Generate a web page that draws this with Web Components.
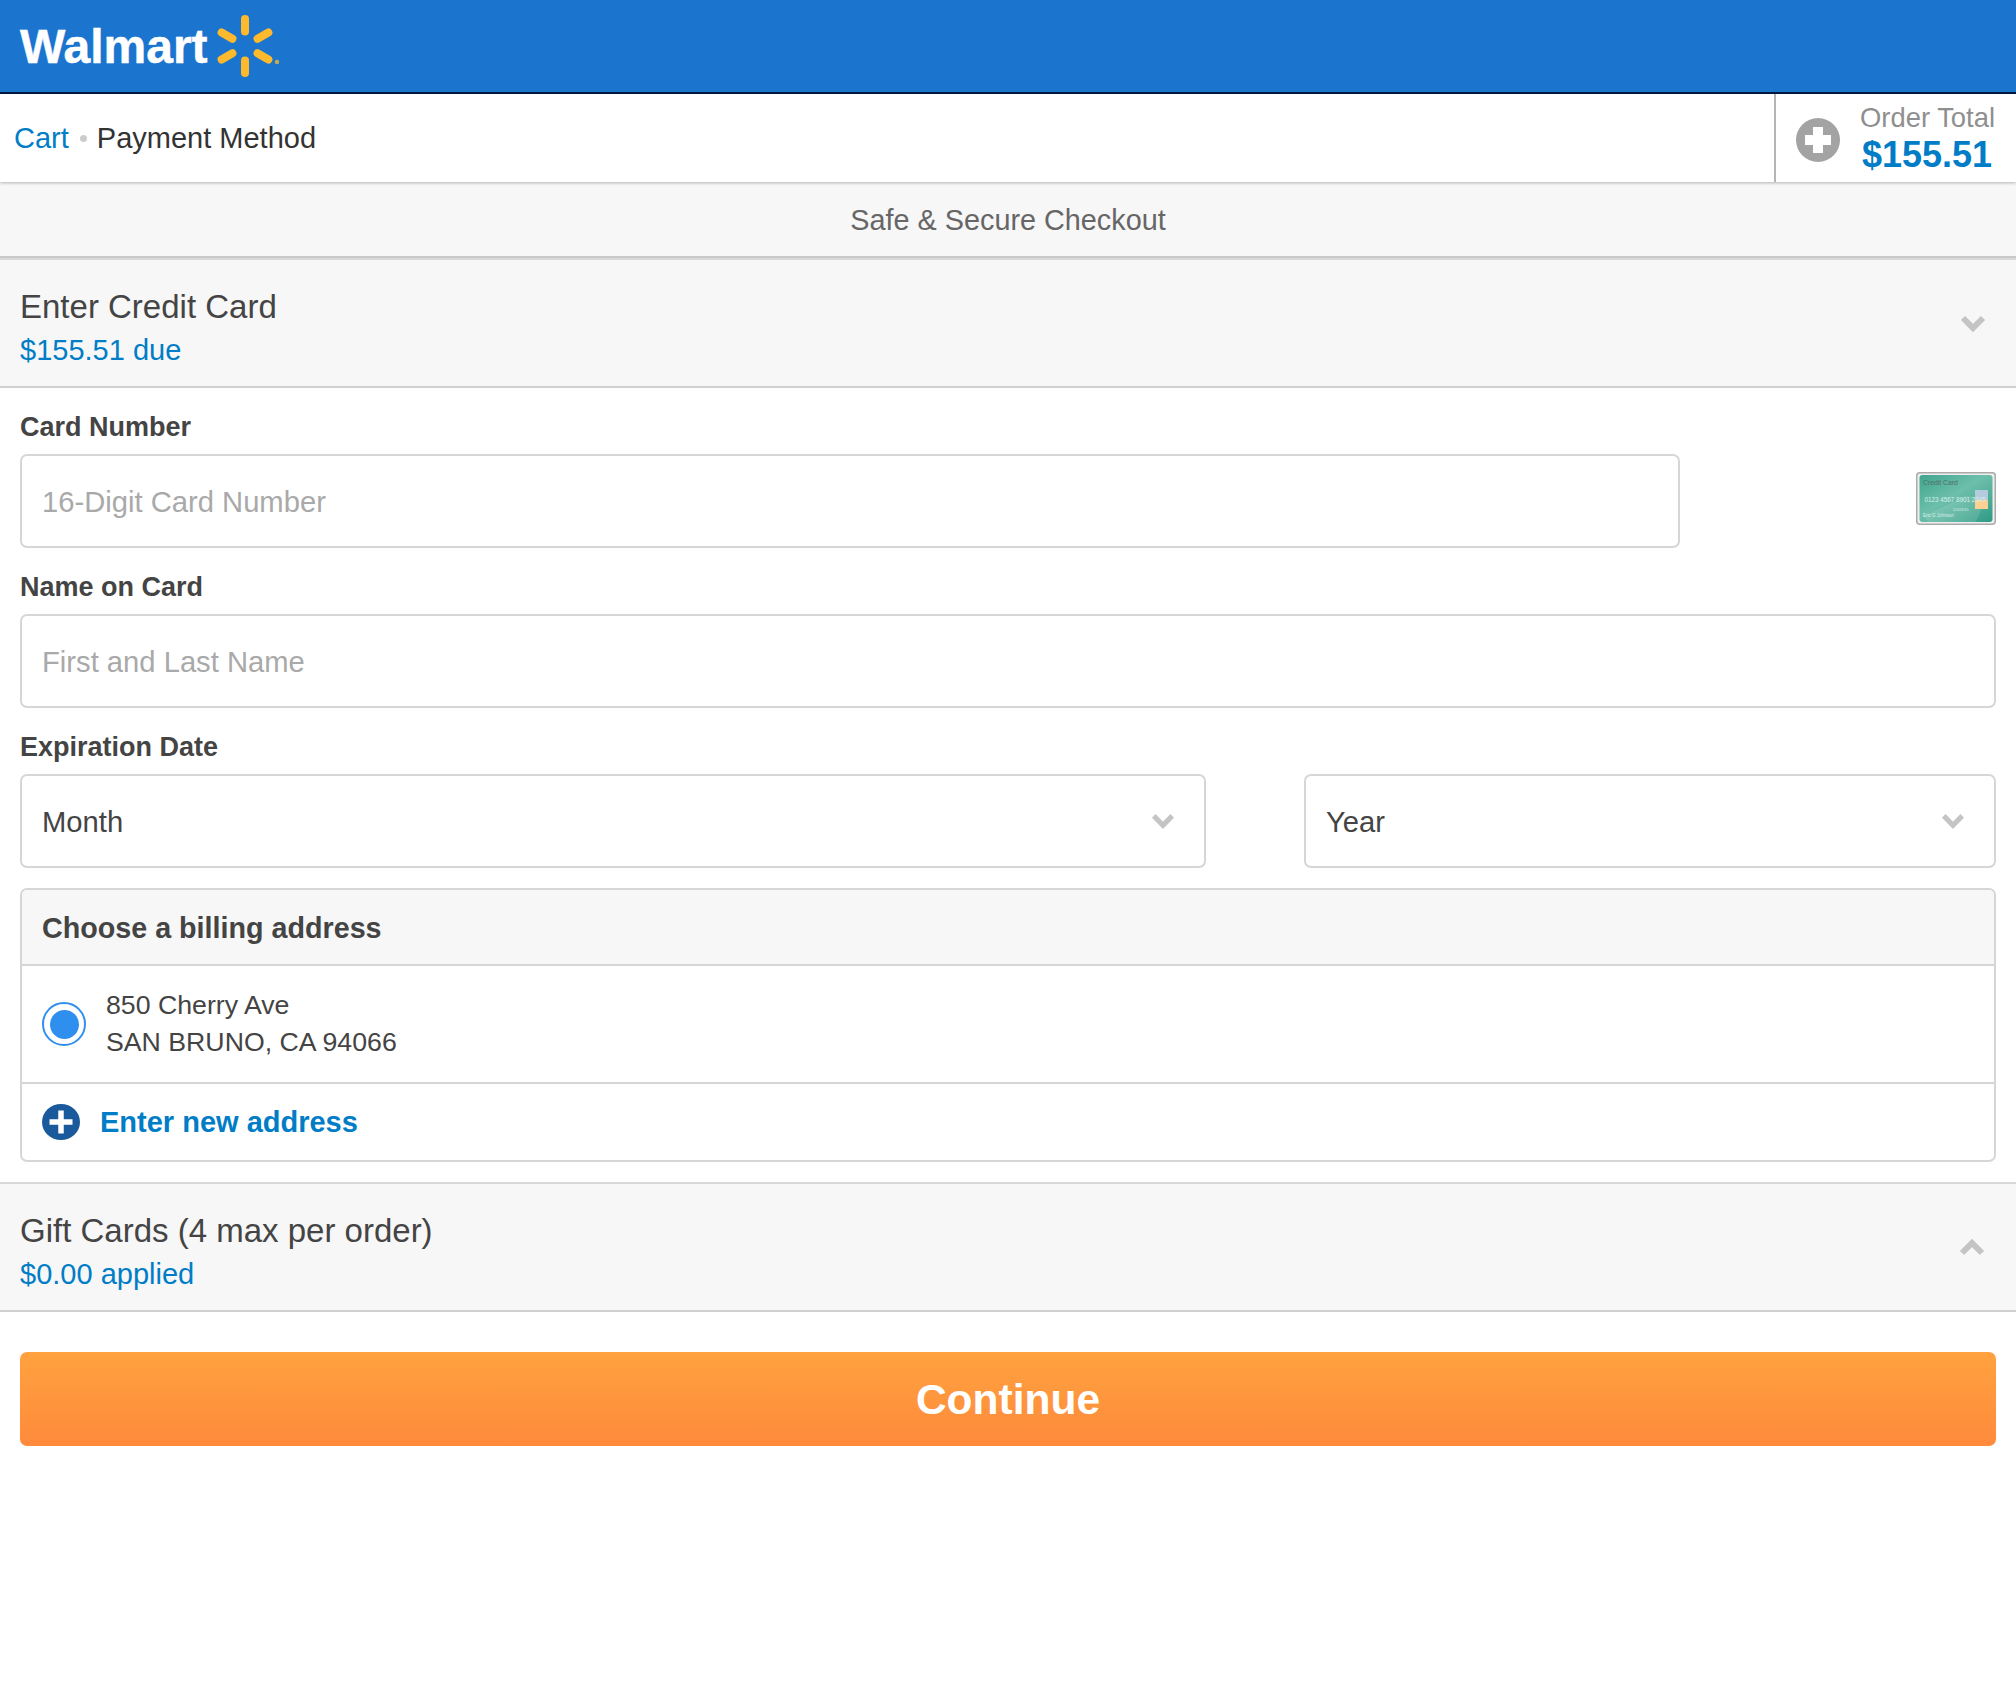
<!DOCTYPE html>
<html><head><meta charset="utf-8"><title>Payment Method</title>
<style>
html,body{margin:0;padding:0;background:#fff}
body{font-family:"Liberation Sans",Arial,sans-serif;color:#444;width:2016px;min-height:1698px}
</style></head><body>
<wm-header></wm-header>
<wm-crumbs></wm-crumbs>
<wm-notice>Safe &amp; Secure Checkout</wm-notice>
<wm-section-head dir-icon="down" title-text="Enter Credit Card" sub="$155.51 due"></wm-section-head>
<wm-form>
  <wm-field label="Card Number"><wm-card-row><wm-box placeholder>16-Digit Card Number</wm-box><wm-card-art></wm-card-art></wm-card-row></wm-field>
  <wm-field label="Name on Card"><wm-box placeholder>First and Last Name</wm-box></wm-field>
  <wm-field label="Expiration Date"><wm-expiry><wm-box select>Month</wm-box><wm-box select>Year</wm-box></wm-expiry></wm-field>
  <wm-billing></wm-billing>
</wm-form>
<wm-section-head dir-icon="up" title-text="Gift Cards (4 max per order)" sub="$0.00 applied"></wm-section-head>
<wm-continue>Continue</wm-continue>
<script>
function def(name, html){
  customElements.define(name, class extends HTMLElement{
    connectedCallback(){
      if(this.shadowRoot) return;
      const r=this.attachShadow({mode:'open'});
      r.innerHTML = typeof html==='function' ? html(this) : html;
    }
  });
}
const chev=(dir,w,h,sw)=>`<svg width="${w}" height="${h}" viewBox="0 0 26 17" preserveAspectRatio="none" style="display:block">
<path d="${dir==='up'?'M3 14 13 4l10 10':'M3 3l10 10L23 3'}" fill="none" stroke="#c4c4c4" stroke-width="${sw}"/></svg>`;

def('wm-header',`<style>
:host{display:flex;align-items:center;height:92px;background:#1b75cf;border-bottom:2px solid #001a3d;padding-left:20px}
.t{font:bold 48px/1 "Liberation Sans",Arial,sans-serif;color:#fff;position:relative;top:1px;-webkit-text-stroke:.5px #fff}
svg{display:block;margin-left:7px;position:relative;top:1px}
</style><span class="t">Walmart</span>
<svg width="68" height="64" viewBox="0 0 68 64" fill="#ffb92c">
<g transform="translate(30,31)">
<rect x="-4" y="-31" width="8" height="20.500" rx="4"/>
<rect x="-4" y="-31" width="8" height="20.500" rx="4" transform="rotate(60)"/>
<rect x="-4" y="-31" width="8" height="20.500" rx="4" transform="rotate(120)"/>
<rect x="-4" y="-31" width="8" height="20.500" rx="4" transform="rotate(180)"/>
<rect x="-4" y="-31" width="8" height="20.500" rx="4" transform="rotate(240)"/>
<rect x="-4" y="-31" width="8" height="20.500" rx="4" transform="rotate(300)"/>
</g><circle cx="62" cy="47" r="2.200" fill="#c9a94e"/></svg>`);

def('wm-crumbs',`<style>
:host{display:flex;align-items:stretch;height:88px;background:#fff;position:relative;z-index:1;box-shadow:0 1px 3px rgba(0,0,0,.28)}
.path{flex:1;display:flex;align-items:center;padding-left:14px;font-size:29px;color:#333}
a{color:#007dc6;text-decoration:none}
.dot{width:7px;height:7px;border-radius:50%;background:#ccc;margin:0 11px 0 11px;position:relative;left:0}
.p{margin-left:-1px}
wm-total{flex:none}
</style><div class="path"><a>Cart</a><span class="dot"></span><span class="p">Payment Method</span></div><wm-total></wm-total>`);

def('wm-total',`<style>
:host{display:flex;align-items:center;width:242px;border-left:2px solid #b5b5b5;padding-left:20px;box-sizing:border-box}
svg{display:block;flex:none;margin-right:20px;position:relative;top:2px}
.n{color:#8f8f8f;font-size:27.400px;line-height:34px;white-space:nowrap}
.v{color:#007dc6;font-size:36px;font-weight:bold;line-height:40px;margin-left:2px;white-space:nowrap}
</style><svg width="44" height="44" viewBox="0 0 44 44"><circle cx="22" cy="22" r="22" fill="#a3a3a3"/><path d="M17 9h10v8h8v10h-8v8H17v-8H9V17h8z" fill="#fff"/></svg>
<div><div class="n">Order Total</div><div class="v">$155.51</div></div>`);

def('wm-notice',`<style>
:host{display:flex;align-items:center;justify-content:center;height:74px;background:#f7f7f7;border-bottom:2px solid #c9c9c9;color:#666;font-size:28.800px}
span{position:relative;top:1px}
</style><span><slot></slot></span>`);

def('wm-section-head',el=>`<style>
:host{display:block;position:relative;background:#f7f7f7;border-top:2px solid #d8d8d8;border-bottom:2px solid #d0d0d0;padding:26px 20px 14px}
.t{font-size:33px;line-height:42px;color:#444}
.s{font-size:29px;line-height:44px;color:#007dc6}
.c{position:absolute;right:${el.getAttribute('dir-icon')==='up'?31:30}px;top:55px}
</style><div class="t">${el.getAttribute('title-text')}</div><div class="s">${el.getAttribute('sub')}</div>
<div class="c">${chev(el.getAttribute('dir-icon'),26,17,6)}</div>`);

def('wm-form',`<style>:host{display:block;padding:0 20px 20px}</style><slot></slot>`);

def('wm-field',el=>`<style>
:host{display:block;padding-top:21px}
.l{font-size:27px;font-weight:bold;line-height:36px;margin-bottom:9px;color:#444}
</style><div class="l">${el.getAttribute('label')}</div><slot></slot>`);

def('wm-box',el=>`<style>
:host{display:flex;align-items:center;justify-content:space-between;height:94px;box-sizing:border-box;border:2px solid #d6d6d6;border-radius:7px;padding:0 20px;font-size:29.200px;line-height:36px;background:#fff;color:${el.hasAttribute('placeholder')?'#a9a9a9':'#444'}}
span.x{position:relative;top:1px}
</style><span class="x"><slot></slot></span>${el.hasAttribute('select')?`<span style="margin-right:9px">${chev('down',24,16,5.500)}</span>`:''}`);

def('wm-card-row',`<style>
:host{display:flex;align-items:center;justify-content:space-between}
::slotted(wm-box){width:1660px}
</style><slot></slot>`);

def('wm-card-art',`<style>:host{display:block;flex:none;margin-top:-6px}svg{display:block}</style>
<svg width="80" height="53" viewBox="0 0 80 53">
<defs><linearGradient id="g" x1="0" y1="0" x2="1" y2="1"><stop offset="0" stop-color="#3fa58f"/><stop offset=".45" stop-color="#6dbfaa"/><stop offset="1" stop-color="#2f9a86"/></linearGradient></defs>
<rect x=".75" y=".75" width="78.500" height="51.500" rx="3" fill="#eee" stroke="#aaa" stroke-width="1.500"/>
<rect x="3.500" y="3" width="73" height="47" rx="3" fill="url(#g)"/>
<path d="M8 44 50 24l20 2-10 24H12z" fill="#fff" opacity=".12"/>
<rect x="59" y="18" width="13" height="10" fill="#b4cbdb"/><rect x="59" y="28" width="13" height="9" fill="#fbd193"/>
<text x="7" y="13" font-family="Liberation Sans" font-size="6.800" fill="#4f6f66">Credit Card</text>
<text x="8.500" y="29.500" font-family="Liberation Sans" font-size="6.300" fill="#d8efe8">0123 4567 8901 2345</text>
<text x="37" y="39" font-family="Liberation Sans" font-size="4" fill="#d8efe8">12/03/15</text>
<text x="7" y="45" font-family="Liberation Sans" font-size="4.500" fill="#d8efe8">Eric G Johnson</text></svg>`);

def('wm-expiry',`<style>
:host{display:grid;grid-template-columns:1186px 692px;justify-content:space-between}
</style><slot></slot>`);

def('wm-billing',`<style>
:host{display:block;margin-top:20px;border:2px solid #d6d6d6;border-radius:7px;overflow:hidden;box-sizing:border-box;height:274px}
.h{height:76px;box-sizing:border-box;background:#f7f7f7;border-bottom:2px solid #d6d6d6;padding:2px 20px 0;display:flex;align-items:center;font-size:28.700px;font-weight:bold;color:#444}
.a{height:118px;box-sizing:border-box;border-bottom:2px solid #d6d6d6;display:flex;align-items:center;padding:0 20px;font-size:26.700px;line-height:37.500px;color:#444}
.r{width:44px;height:44px;box-sizing:border-box;border:2px solid #2f8fee;border-radius:50%;padding:5.500px;margin-right:20px;flex:none}
.r i{display:block;width:29px;height:29px;border-radius:50%;background:#2f8fee}
.n{display:flex;align-items:center;padding:0 20px;height:76px;font-size:29px;font-weight:bold;color:#007dc6}
svg{display:block;margin-right:20px;flex:none}
</style>
<div class="h">Choose a billing address</div>
<div class="a"><div class="r"><i></i></div><div>850 Cherry Ave<br>SAN BRUNO, CA 94066</div></div>
<div class="n"><svg width="38" height="36" viewBox="0 0 38 36"><ellipse cx="19" cy="18" rx="19" ry="18" fill="#1a5a9c"/><path d="M19 6.500v23M7.500 18h23" stroke="#fff" stroke-width="5.500"/></svg><span>Enter new address</span></div>`);

def('wm-continue',`<style>
:host{display:flex;align-items:center;justify-content:center;margin:40px 20px 0;height:94px;border-radius:7px;background:linear-gradient(#ffa23f,#fe8a3b);color:#fff;font-size:42.500px;font-weight:bold}
span{position:relative;top:1px}
</style><span><slot></slot></span>`);
</script>
</body></html>
